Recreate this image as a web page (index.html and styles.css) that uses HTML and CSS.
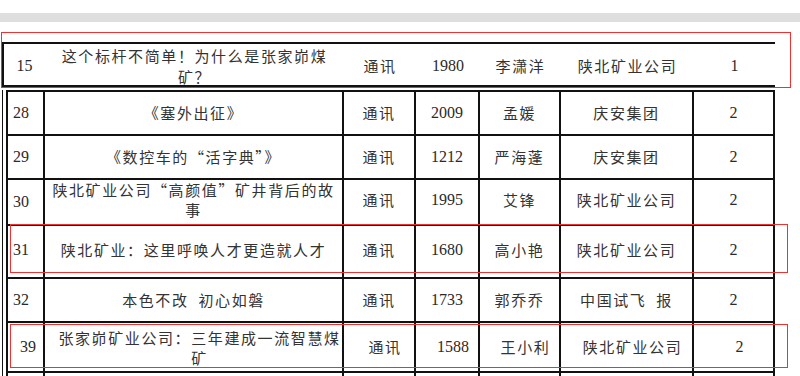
FILE: index.html
```html
<!DOCTYPE html>
<html lang="zh-CN">
<head>
<meta charset="utf-8">
<title>稿件统计表</title>
<link rel="stylesheet" href="styles.css">
</head>
<body>
<div class="page">
  <div class="gray"></div>

  <div class="r15">
    <div class="c">15</div>
    <div class="c cn tall">这个标杆不简单！为什么是张家峁煤<br>矿？</div>
    <div class="c cn">通讯</div>
    <div class="c">1980</div>
    <div class="c cn">李潇洋</div>
    <div class="c cn">陕北矿业公司</div>
    <div class="c">1</div>
  </div>

  <div class="tw">
    <div class="tbl">
      <div class="row h44">
        <div class="c no">28</div>
        <div class="c cn">《塞外出征》</div>
        <div class="c cn">通讯</div>
        <div class="c">2009</div>
        <div class="c cn">孟媛</div>
        <div class="c cn">庆安集团</div>
        <div class="c">2</div>
      </div>
      <div class="row h44">
        <div class="c no">29</div>
        <div class="c cn">《数控车的“活字典”》</div>
        <div class="c cn">通讯</div>
        <div class="c">1212</div>
        <div class="c cn">严海蓬</div>
        <div class="c cn">庆安集团</div>
        <div class="c">2</div>
      </div>
      <div class="row h43">
        <div class="c no">30</div>
        <div class="c cn up">陕北矿业公司“高颜值”矿井背后的故<br>事</div>
        <div class="c cn up">通讯</div>
        <div class="c up">1995</div>
        <div class="c cn up">艾锋</div>
        <div class="c cn up">陕北矿业公司</div>
        <div class="c up">2</div>
      </div>
      <div class="row h56">
        <div class="c no">31</div>
        <div class="c cn">陕北矿业：这里呼唤人才更造就人才</div>
        <div class="c cn">通讯</div>
        <div class="c">1680</div>
        <div class="c cn">高小艳</div>
        <div class="c cn">陕北矿业公司</div>
        <div class="c">2</div>
      </div>
      <div class="row h44">
        <div class="c no">32</div>
        <div class="c cn">本色不改&nbsp;&nbsp;初心如磐</div>
        <div class="c cn">通讯</div>
        <div class="c">1733</div>
        <div class="c cn">郭乔乔</div>
        <div class="c cn">中国试飞&nbsp;&nbsp;报</div>
        <div class="c">2</div>
      </div>
      <div class="row h50 shift">
        <div class="c no">39</div>
        <div class="c cn">张家峁矿业公司：三年建成一流智慧煤<br>矿</div>
        <div class="c cn">通讯</div>
        <div class="c">1588</div>
        <div class="c cn">王小利</div>
        <div class="c cn">陕北矿业公司</div>
        <div class="c">2</div>
      </div>
      <div class="row h44">
        <div class="c no"></div>
        <div class="c cn"></div>
        <div class="c cn"></div>
        <div class="c"></div>
        <div class="c cn"></div>
        <div class="c cn"></div>
        <div class="c"></div>
      </div>
    </div>
  </div>

  <div class="mark m1"></div>
  <div class="mark m2"></div>
  <div class="mark m3"></div>
</div>
</body>
</html>
```

FILE: styles.css
```css
html, body {
  margin: 0;
  padding: 0;
  background: #ffffff;
  overflow: hidden;
}

.page {
  position: relative;
  width: 800px;
  height: 376px;
  overflow: hidden;
  color: #2a2a2a;
  font-family: "Liberation Serif", "Noto Sans CJK SC", serif;
  font-size: 16px;
}

.gray {
  margin-top: 13px;
  height: 9px;
  background: #dedede;
}

.r15 {
  margin-top: 20px;
  margin-left: 2px;
  width: 771px;
  height: 41px;
  border-top: 2px solid #111;
  border-bottom: 2px solid #111;
  border-left: 2px solid #111;
  display: grid;
  grid-template-columns: 41px 299px 72px 64px 81px 133px 81px;
}

.c {
  display: flex;
  align-items: center;
  justify-content: center;
  text-align: center;
  line-height: 20px;
  white-space: nowrap;
}

.cn {
  font-family: "Noto Sans CJK SC", sans-serif;
  font-size: 15px;
  letter-spacing: 1.6px;
  color: #333333;
}

.r15 > .tall {
  line-height: 21px;
  padding-top: 1px;
}

.tw {
  margin-top: 3px;
  margin-left: 2px;
  border-left: 1px solid #111;
  padding-left: 3px;
  height: 300px;
}

.tbl {
  width: 767px;
  border-top: 2px solid #111;
  border-left: 2px solid #111;
}

.row {
  display: grid;
  grid-template-columns: 37px 299px 72px 64px 81px 133px 81px;
}

.row > .c {
  box-sizing: border-box;
  border-right: 2px solid #111;
  border-bottom: 2px solid #111;
}

.row > .no {
  justify-content: flex-start;
  padding-left: 5px;
}

.row > .up {
  padding-bottom: 4px;
}

.h43 { height: 43px; }
.h44 { height: 44px; }
.h50 { height: 50px; }
.h56 { height: 56px; }

.shift > .c {
  padding-left: 12px;
}

.shift > .cn:nth-child(2) {
  justify-content: flex-start;
  display: block;
  padding-top: 5px;
}

.mark {
  position: absolute;
  border: 1px solid #f23030;
  box-sizing: border-box;
}

.m1 { left: 1px; top: 32px; width: 790px; height: 56px; }
.m2 { left: 10px; top: 224px; width: 778px; height: 49px; }
.m3 { left: 10px; top: 324px; width: 778px; height: 44px; }
```
